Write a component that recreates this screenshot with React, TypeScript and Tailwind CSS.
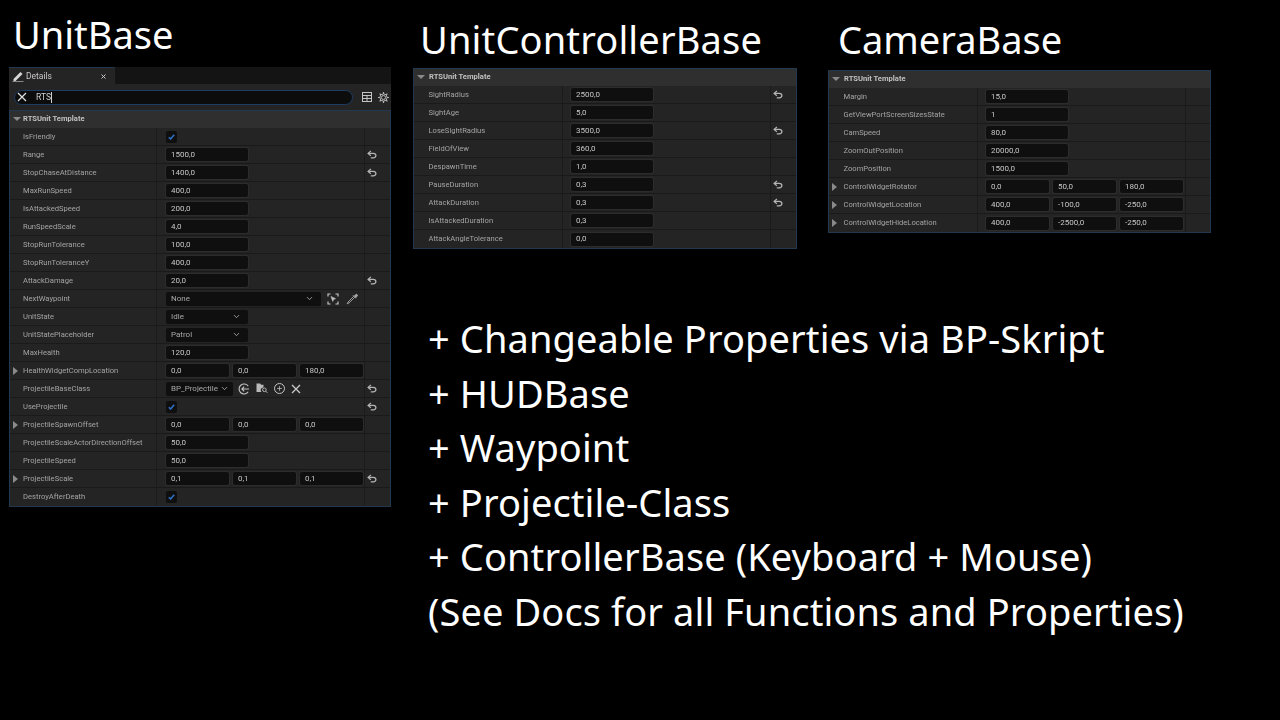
import { ChevronDown, Plus } from 'lucide-react';

type Row = {
  label: string;
  kind?: 'num' | 'triple' | 'check' | 'select' | 'waypoint' | 'class';
  values?: string[];
  reset?: boolean;
};

const unitRows: Row[] = [
  { label: 'IsFriendly', kind: 'check' },
  { label: 'Range', values: ['1500,0'], reset: true },
  { label: 'StopChaseAtDistance', values: ['1400,0'], reset: true },
  { label: 'MaxRunSpeed', values: ['400,0'] },
  { label: 'IsAttackedSpeed', values: ['200,0'] },
  { label: 'RunSpeedScale', values: ['4,0'] },
  { label: 'StopRunTolerance', values: ['100,0'] },
  { label: 'StopRunToleranceY', values: ['400,0'] },
  { label: 'AttackDamage', values: ['20,0'], reset: true },
  { label: 'NextWaypoint', kind: 'waypoint', values: ['None'] },
  { label: 'UnitState', kind: 'select', values: ['Idle'] },
  { label: 'UnitStatePlaceholder', kind: 'select', values: ['Patrol'] },
  { label: 'MaxHealth', values: ['120,0'] },
  { label: 'HealthWidgetCompLocation', kind: 'triple', values: ['0,0', '0,0', '180,0'] },
  { label: 'ProjectileBaseClass', kind: 'class', values: ['BP_Projectile'], reset: true },
  { label: 'UseProjectile', kind: 'check', reset: true },
  { label: 'ProjectileSpawnOffset', kind: 'triple', values: ['0,0', '0,0', '0,0'] },
  { label: 'ProjectileScaleActorDirectionOffset', values: ['50,0'] },
  { label: 'ProjectileSpeed', values: ['50,0'] },
  { label: 'ProjectileScale', kind: 'triple', values: ['0,1', '0,1', '0,1'], reset: true },
  { label: 'DestroyAfterDeath', kind: 'check' },
];

const controllerRows: Row[] = [
  { label: 'SightRadius', values: ['2500,0'], reset: true },
  { label: 'SightAge', values: ['5,0'] },
  { label: 'LoseSightRadius', values: ['3500,0'], reset: true },
  { label: 'FieldOfView', values: ['360,0'] },
  { label: 'DespawnTime', values: ['1,0'] },
  { label: 'PauseDuration', values: ['0,3'], reset: true },
  { label: 'AttackDuration', values: ['0,3'], reset: true },
  { label: 'IsAttackedDuration', values: ['0,3'] },
  { label: 'AttackAngleTolerance', values: ['0,0'] },
];

const cameraRows: Row[] = [
  { label: 'Margin', values: ['15,0'] },
  { label: 'GetViewPortScreenSizesState', values: ['1'] },
  { label: 'CamSpeed', values: ['80,0'] },
  { label: 'ZoomOutPosition', values: ['20000,0'] },
  { label: 'ZoomPosition', values: ['1500,0'] },
  { label: 'ControlWidgetRotator', kind: 'triple', values: ['0,0', '50,0', '180,0'] },
  { label: 'ControlWidgetLocation', kind: 'triple', values: ['400,0', '-100,0', '-250,0'] },
  { label: 'ControlWidgetHideLocation', kind: 'triple', values: ['400,0', '-2500,0', '-250,0'] },
];

const notes = [
  '+ Changeable Properties via BP-Skript',
  '+ HUDBase',
  '+ Waypoint',
  '+ Projectile-Class',
  '+ ControllerBase (Keyboard + Mouse)',
  '(See Docs for all Functions and Properties)',
];

function ResetArrow() {
  return (
    <svg width="10" height="9" viewBox="0 0 9 8" fill="none" stroke="#b4b4b4" strokeWidth="1.1">
      <path d="M3.5 0.8 1 3l2.5 2.2" />
      <path d="M1 3h4.6c1.4 0 2.4.9 2.4 2s-1 2-2.4 2H3.4" />
    </svg>
  );
}

function Field({ value, className }: { value: string; className: string }) {
  return (
    <div className={`flex h-[13px] items-center rounded-[2px] bg-[#0f0f0f] pl-[5px] text-[8px] text-[#c8c8c8] ring-1 ring-[#2c2c2c] ${className}`}>
      {value}
    </div>
  );
}

function SelectBox({ value, className }: { value: string; className: string }) {
  return (
    <div className={`flex h-[14px] items-center justify-between rounded-[2px] bg-[#0f0f0f] pl-[5px] pr-[7px] text-[8px] text-[#a8a8a8] ${className}`}>
      <span>{value}</span>
      <ChevronDown size={9} strokeWidth={2} color="#c0c0c0" />
    </div>
  );
}

function Check() {
  return (
    <div className="flex h-[12px] w-[11px] items-center justify-center rounded-[2px] bg-[#0f0f0f]">
      <svg width="7" height="6" viewBox="0 0 7 6" fill="none" stroke="#2f6fc4" strokeWidth="1.6">
        <path d="M0.8 3.2 2.6 5 6.2 0.8" />
      </svg>
    </div>
  );
}

function WaypointIcons() {
  return (
    <div className="ml-[6px] flex items-center gap-[7px]">
      <svg width="12" height="12" viewBox="0 0 12 12" fill="none" stroke="#c4c4c4" strokeWidth="1.2">
        <path d="M1 3.5V1h2.5M8.5 1H11v2.5M11 8.5V11H8.5M3.5 11H1V8.5" />
        <path d="M4 3.5l4.5 2.2-2 .7-.7 2z" fill="#c4c4c4" strokeWidth="0.6" />
      </svg>
      <svg width="12" height="12" viewBox="0 0 12 12" fill="none" stroke="#a8a8a8" strokeWidth="0.9">
        <path d="M7.5 3.5 2 9l-.8 1.8L3 10l5.5-5.5z" />
        <path d="M6.8 2.2 9.8 5.2M8 3.4l1.6-1.7c.5-.5 1.2-.4 1.6 0 .4.5.4 1.1 0 1.6L9.6 4.8" fill="#a8a8a8" />
      </svg>
    </div>
  );
}

function ClassIcons() {
  return (
    <div className="ml-[5px] flex items-center gap-[6px]">
      <svg width="12" height="12" viewBox="0 0 12 12" fill="none" stroke="#c4c4c4" strokeWidth="1.1">
        <path d="M10.2 3.2A5 5 0 1 0 10.2 8.8" />
        <path d="M11 6H4M6.2 3.6 3.8 6l2.4 2.4" />
      </svg>
      <svg width="12" height="11" viewBox="0 0 12 11" fill="none">
        <path d="M0.5 0.5h3.6l1 1.2h2.4v2.8a2.6 2.6 0 0 0-2 4.5H0.5z" fill="#b8b8b8" />
        <circle cx="8.4" cy="6.8" r="1.8" stroke="#b8b8b8" />
        <path d="M9.8 8.2 11.4 9.8" stroke="#b8b8b8" />
      </svg>
      <div className="flex h-[11px] w-[11px] items-center justify-center rounded-full border border-[#c4c4c4]">
        <Plus size={7} strokeWidth={2.5} color="#c4c4c4" />
      </div>
      <svg width="10" height="10" viewBox="0 0 10 10" fill="none" stroke="#c8c8c8" strokeWidth="1.3">
        <path d="M1 1l8 8M9 1 1 9" />
      </svg>
    </div>
  );
}

function RowValue({ row }: { row: Row }) {
  const values = row.values ?? [];
  if (row.kind === 'check') return <Check />;
  if (row.kind === 'select') return <SelectBox value={values[0]} className="w-[82px]" />;
  if (row.kind === 'waypoint') {
    return (
      <>
        <SelectBox value={values[0]} className="w-[155px]" />
        <WaypointIcons />
      </>
    );
  }
  if (row.kind === 'class') {
    return (
      <>
        <SelectBox value={values[0]} className="w-[67px] !pr-[4px]" />
        <ClassIcons />
      </>
    );
  }
  if (row.kind === 'triple') {
    return (
      <div className="flex gap-[4px]">
        {values.map((value, i) => (
          <Field key={i} value={value} className="w-[63px]" />
        ))}
      </div>
    );
  }
  return <Field value={values[0]} className="w-[82px]" />;
}

function PropertyRow({ row, wide }: { row: Row; wide?: boolean }) {
  return (
    <div className="flex h-[18px] border-b border-[#1a1a1a] last:border-b-0">
      <div
        className={`relative flex shrink-0 items-center border-r border-[#1b1b1b] text-[7.6px] text-[#a4a4a4] ${
          wide ? 'w-[149px] pl-[14.5px]' : 'w-[147px] pl-[13px]'
        }`}
      >
        {row.kind === 'triple' && (
          <span className="absolute left-[3px] h-0 w-0 border-y-[4px] border-l-[5px] border-y-transparent border-l-[#8a8a8a]" />
        )}
        {row.label}
      </div>
      <div className={`flex w-[208px] shrink-0 items-center border-r border-[#1b1b1b] ${wide ? 'pl-[8px]' : 'pl-[9px]'}`}>
        <RowValue row={row} />
      </div>
      <div className="flex flex-1 items-center pl-[2px]">{row.reset && <ResetArrow />}</div>
    </div>
  );
}

function Panel({ rows, wide }: { rows: Row[]; wide?: boolean }) {
  return (
    <div className="border border-[#22384f] bg-[#242424] blur-[0.3px]">
      <div className={`flex h-[17px] items-center bg-[#2f2f2f] pb-[1px] pl-[3px] text-[7.6px] font-bold text-[#c0c0c0] ${wide ? 'gap-[4px]' : 'gap-[2px]'}`}>
        <span className="h-0 w-0 border-x-[4px] border-t-[4px] border-x-transparent border-t-[#8a8a8a]" />
        RTSUnit Template
      </div>
      {rows.map((row) => (
        <PropertyRow key={row.label} row={row} wide={wide} />
      ))}
    </div>
  );
}

function Heading({ children }: { children: string }) {
  return <h1 className="whitespace-nowrap text-[38px] leading-[46px] text-white">{children}</h1>;
}

function DetailsBar() {
  return (
    <div className="blur-[0.3px]">
      <div className="flex h-[17px] bg-[#141414]">
        <div className="flex w-[106px] items-center border-t border-[#22384f] bg-[#242424] pl-[3px] pr-[9px] text-[8.5px] text-[#c8c8c8]">
          <svg width="12" height="11" viewBox="0 0 12 11" fill="none">
            <path d="M1.5 8 8.5 1l2 2-7 7H1.5z" fill="#d8d8d8" />
            <path d="M0.5 10.5h11" stroke="#888" />
          </svg>
          <span className="ml-[2px]">Details</span>
          <svg className="ml-auto" width="5" height="5" viewBox="0 0 5 5" stroke="#c8c8c8" strokeWidth="1">
            <path d="M.5.5l4 4M4.5.5l-4 4" />
          </svg>
        </div>
      </div>
      <div className="flex h-[26px] items-center bg-[#242424] pl-[5px]">
        <div className="flex h-[15px] w-[339px] items-center rounded-full border border-[#1e3d63] bg-[#0c0c0c] pl-[2px] text-[8.5px] text-[#d0d0d0]">
          <svg width="10" height="10" viewBox="0 0 10 10" stroke="#e0e0e0" strokeWidth="1.2">
            <path d="M1 1l8 8M9 1 1 9" />
          </svg>
          <span className="ml-[9px] border-r border-[#d0d0d0] pr-[0.5px] leading-[11px]">RTS</span>
        </div>
        <div className="ml-[9px] flex items-center gap-[6px]">
          <svg width="10" height="10" viewBox="0 0 10 10" fill="none" stroke="#c4c4c4" strokeWidth="1">
            <rect x="0.5" y="0.5" width="9" height="9" />
            <path d="M0.5 3.5h9M0.5 6.5h9M5 3.5v6" />
          </svg>
          <svg width="11" height="11" viewBox="0 0 11 11" fill="none" stroke="#b4b4b4">
            <circle cx="5.5" cy="5.5" r="2" />
            <circle cx="5.5" cy="5.5" r="3.6" strokeWidth="1" />
            <path d="M5.5 0v2M5.5 9v2M0 5.5h2M9 5.5h2M1.6 1.6 3 3M8 8l1.4 1.4M9.4 1.6 8 3M3 8 1.6 9.4" strokeWidth="1.2" />
          </svg>
        </div>
      </div>
    </div>
  );
}

export default function App() {
  return (
    <div className="flex h-[720px] w-[1280px] overflow-hidden bg-black font-['Noto_Sans',sans-serif] text-white">
      <div className="w-[413px] shrink-0 pl-[9px]">
        <div className="h-[67px] pl-[4px] pt-[11px]">
          <Heading>UnitBase</Heading>
        </div>
        <div className="w-[382px] font-['Roboto',sans-serif]">
          <DetailsBar />
          <Panel rows={unitRows} />
        </div>
      </div>

      <div className="flex-1">
        <div className="flex">
          <div className="w-[415px] shrink-0">
            <div className="h-[68px] pl-[7px] pt-[16px] tracking-[0.15px]">
              <Heading>UnitControllerBase</Heading>
            </div>
            <div className="w-[384px] font-['Roboto',sans-serif]">
              <Panel rows={controllerRows} wide />
            </div>
          </div>
          <div className="w-[383px] shrink-0">
            <div className="h-[70px] pl-[10px] pt-[16px]">
              <Heading>CameraBase</Heading>
            </div>
            <div className="font-['Roboto',sans-serif]">
              <Panel rows={cameraRows} wide />
            </div>
          </div>
        </div>
        <div className="ml-[15px] mt-[62px] text-[38px] leading-[54.6px] tracking-[0.1px]">
          {notes.map((note) => (
            <div key={note} className="whitespace-nowrap">
              {note}
            </div>
          ))}
        </div>
      </div>
    </div>
  );
}
